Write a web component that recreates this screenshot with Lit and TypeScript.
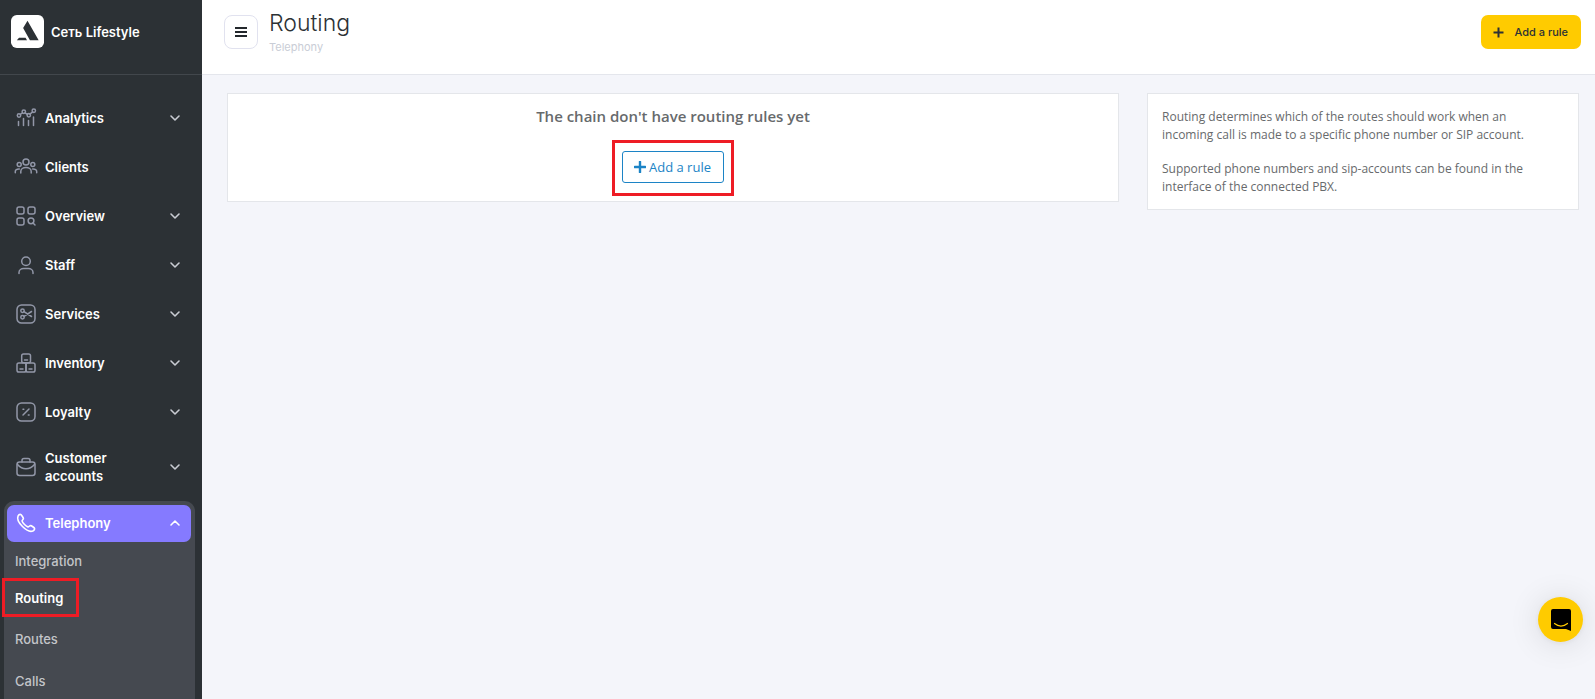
import { LitElement, html, css, svg, nothing } from "lit";
import { customElement, property } from "lit/decorators.js";

const icons: Record<string, unknown> = {
  analytics: svg`<circle cx="3" cy="7.5" r="1.7"/><circle cx="7.8" cy="3.8" r="1.7"/><circle cx="12.8" cy="7.3" r="1.7"/><circle cx="17.8" cy="2.8" r="1.7"/><path d="M4.2 6.5 6.5 4.8M9 4.8l2.6 1.7M13.9 6.1l2.8-2.3M2.5 13.5v4M7.5 10.5v7M12.5 12.5v5M17.5 9v8.500"/>`,
  clients: svg`<circle cx="10" cy="5" r="3"/><circle cx="3.200" cy="7.500" r="2"/><circle cx="16.800" cy="7.500" r="2"/><path d="M4.800 16v-1.500a5.200 4 0 0 1 10.400 0V16M-.7 15.800v-1.300c0-1.600 1.500-2.700 4-2.500M20.700 15.800v-1.300c0-1.600-1.500-2.700-4-2.500"/>`,
  overview: svg`<rect x="1" y="1" width="7" height="7" rx="2"/><rect x="12" y="1" width="7" height="7" rx="2"/><rect x="1" y="12" width="7" height="7" rx="2"/><circle cx="15" cy="14.800" r="2.900"/><path d="m17 17 2 2"/>`,
  staff: svg`<circle cx="10" cy="6.300" r="4.300"/><path d="M3 18.500v-1c0-2.600 2.400-4 4.600-4h4.800c2.200 0 4.600 1.400 4.600 4v1"/>`,
  services: svg`<rect x="1" y="1" width="18" height="18" rx="4.500"/><circle cx="6.500" cy="6.800" r="1.700"/><circle cx="6.500" cy="13.200" r="1.700"/><path d="m8 7.700 7.500 4.800M8 12.300l7.500-4.800"/>`,
  inventory: svg`<rect x="5.700" y="1" width="8.800" height="8.800" rx="1.800"/><rect x="1" y="10" width="9" height="9" rx="1.800"/><rect x="10" y="10" width="9" height="9" rx="1.800"/><path d="M8.500 7h3M4 16h3M13 16h3"/>`,
  loyalty: svg`<rect x="1" y="1" width="18" height="18" rx="4.500"/><path d="m7 13 6-6M7 7.300h.8M12.300 13h.8"/>`,
  accounts: svg`<path d="M6 5V3.500A2 2 0 0 1 8 1.500h4a2 2 0 0 1 2 2V5"/><rect x="1" y="5" width="18" height="13.500" rx="2.500"/><path d="M1.500 7.500c2.200 2.500 5.300 4.300 8.500 4.300s6.300-1.800 8.500-4.300"/>`,
  phone: svg`<path d="M2 3.200C1 5.500 2.500 9.500 6.500 13.500s8 5.500 10.300 4.500c1.200-.6 2-1.700 1.700-2.700-.2-.6-3-2.600-3.900-2.700-1-.1-1.700 1.500-2.700 1.300C10.200 13.500 6.500 9.800 6.100 8.100c-.2-1 1.400-1.700 1.300-2.700C7.300 4.500 5.300 1.700 4.700 1.500 3.700 1.200 2.600 2 2 3.200z"/>`,
};

const chevron = (up = false) => html`<svg class="chevron" viewBox="0 0 10 6" aria-hidden="true">
  <path d=${up ? "M1 5 5 1l4 4" : "M1 1l4 4 4-4"}></path>
</svg>`;

@customElement("nav-item")
class NavItem extends LitElement {
  @property() label = "";
  @property() icon = "";
  @property({ type: Boolean }) link = false;
  @property({ type: Boolean, reflect: true }) open = false;

  static styles = css`
    :host { display: block; }
    .row {
      box-sizing: border-box;
      display: flex;
      align-items: center;
      width: 100%;
      min-height: 49px;
      padding: 13px 22px 13px 16px;
      border: 0;
      background: none;
      color: #fff;
      font: 600 13px/18px Inter, sans-serif;
      text-align: left;
      text-decoration: none;
      cursor: pointer;
    }
    .label { flex: 1; padding: 0 40px 0 9px; }
    .icon {
      flex: none;
      width: 20px;
      height: 20px;
      overflow: visible;
      fill: none;
      stroke: #9297a8;
      stroke-width: 1.5;
      stroke-linecap: round;
      stroke-linejoin: round;
    }
    .chevron {
      flex: none;
      width: 10px;
      height: 6px;
      overflow: visible;
      fill: none;
      stroke: #c9ccd3;
      stroke-width: 1.6;
      stroke-linecap: round;
      stroke-linejoin: round;
    }
    :host([open]) .row {
      min-height: 37px;
      padding: 8px 11px 9px 9px;
      border-radius: 7px;
      background: #857aff;
    }
    :host([open]) .icon { stroke: #fff; stroke-width: 1.6; }
    :host([open]) .chevron { stroke: #fff; }
  `;

  render() {
    const body = html`
      <svg class="icon" viewBox="0 0 20 20" aria-hidden="true">${icons[this.icon]}</svg>
      <span class="label">${this.label}</span>
      ${this.link ? nothing : chevron(this.open)}
    `;
    return this.link
      ? html`<a class="row" href="#">${body}</a>`
      : html`<button class="row" type="button" aria-expanded=${this.open}>${body}</button>`;
  }
}

@customElement("app-root")
class AppRoot extends LitElement {
  static styles = css`
    :host {
      display: flex;
      height: 100vh;
      overflow: hidden;
      background: #f4f5fa;
      font-family: Inter, sans-serif;
    }
    .sidebar {
      flex: none;
      width: 202px;
      background: #2c3135;
      overflow: hidden;
    }
    .brand {
      box-sizing: border-box;
      display: flex;
      align-items: flex-start;
      gap: 7px;
      height: 75px;
      padding: 15px 11px 0;
      border-bottom: 1px solid #42474c;
      color: #fff;
      font-size: 13px;
      font-weight: 600;
      line-height: 34px;
    }
    .logo { width: 33px; height: 33px; }
    .nav { padding-top: 18px; }
    .group {
      margin: 3px 7px 0 4px;
      padding: 4px 4px 0 3px;
      border-radius: 10px 10px 0 0;
      background: #454950;
    }
    .sub {
      display: grid;
      grid-template-rows: 37px 38px 44px 40px;
      margin: 0;
      padding: 0 0 0 8px;
      list-style: none;
      align-items: center;
      justify-items: start;
    }
    .sub a {
      position: relative;
      display: block;
      color: #c3c5c9;
      font-size: 13px;
      font-weight: 500;
      line-height: 18px;
      text-decoration: none;
    }
    .sub .current { color: #fff; font-weight: 600; }
    .marked { position: relative; }
    .marked::after {
      content: "";
      position: absolute;
      inset: -11px -10px -13px;
      border: 3px solid #ee1c25;
      pointer-events: none;
    }
    .sub .marked::after { inset: -11px -16px -10px -13px; }
    .page { flex: 1; min-width: 0; }
    .header {
      box-sizing: border-box;
      display: flex;
      align-items: flex-start;
      height: 75px;
      padding: 0 14px 0 22px;
      border-bottom: 1px solid #e4e6ec;
      background: #fff;
    }
    .menu {
      display: grid;
      place-items: center;
      width: 34px;
      height: 34px;
      margin: 15px 11px 0 0;
      padding: 0;
      border: 1px solid #e1e2ef;
      border-radius: 8px;
      background: #fff;
    }
    .menu svg { width: 12px; height: 10px; }
    .titles { flex: 1; padding-top: 8px; }
    .title {
      margin: 0;
      color: #2c3135;
      font-size: 23px;
      font-weight: 300;
      line-height: 30px;
    }
    .crumb {
      margin: 0;
      color: #c9cdd6;
      font-size: 11px;
      line-height: 18px;
    }
    .primary {
      display: flex;
      align-items: center;
      gap: 10px;
      height: 34px;
      margin-top: 15px;
      padding: 0 13px 0 12px;
      border: 0;
      border-radius: 7px;
      background: #ffcb00;
      color: #2c3135;
      font: 500 11px/18px Inter, sans-serif;
    }
    .primary svg { width: 11px; height: 11px; }
    .content {
      display: grid;
      grid-template-columns: 2fr 1fr;
      align-items: start;
      padding: 18px 2px 0 11px;
      font-family: "Open Sans", sans-serif;
      color: #676a6c;
    }
    .card {
      margin: 0 14px;
      border: 1px solid #e4e6ea;
      background: #fff;
    }
    .empty {
      display: flex;
      flex-direction: column;
      align-items: center;
      gap: 24px;
      padding: 11px 14px 18px;
    }
    .empty h2 {
      margin: 0;
      font-size: 15px;
      font-weight: 600;
      line-height: 22px;
    }
    .outline {
      display: flex;
      align-items: center;
      gap: 3px;
      height: 32px;
      padding: 0 12px 0 11px;
      border: 1px solid #1c84c6;
      border-radius: 3px;
      background: #fff;
      color: #1c84c6;
      font: 400 13px/18px "Open Sans", sans-serif;
    }
    .outline svg { width: 12px; height: 12px; }
    .info { padding: 14px 32px 13px 14px; font-size: 12px; line-height: 18px; }
    .info p { margin: 0 0 16px; }
    .info p:last-child { margin: 0; }
    .chat {
      position: fixed;
      right: 12px;
      bottom: 57px;
      display: grid;
      place-items: center;
      width: 45px;
      height: 45px;
      padding: 0;
      border: 0;
      border-radius: 50%;
      background: #ffcb00;
      box-shadow: 0 1px 6px rgba(0, 0, 0, 0.06), 0 2px 32px rgba(0, 0, 0, 0.12);
    }
    .chat svg { width: 20px; height: 22px; }
  `;

  private items = [
    ["analytics", "Analytics"],
    ["clients", "Clients"],
    ["overview", "Overview"],
    ["staff", "Staff"],
    ["services", "Services"],
    ["inventory", "Inventory"],
    ["loyalty", "Loyalty"],
    ["accounts", "Customer accounts"],
  ];

  render() {
    return html`
      <aside class="sidebar">
        <div class="brand">
          <svg class="logo" viewBox="0 0 34 34" aria-hidden="true">
            <rect width="34" height="34" rx="6" fill="#fff"></rect>
            <path d="M17 6 28.500 26H19.500L12.500 13.300zM8.300 23.500H15L16.500 26H6z" fill="#2c3135"></path>
          </svg>
          <span>Сеть Lifestyle</span>
        </div>
        <nav class="nav" aria-label="Main">
          ${this.items.map(
            ([icon, label]) => html`<nav-item icon=${icon} label=${label} ?link=${icon === "clients"}></nav-item>`
          )}
          <div class="group">
            <nav-item icon="phone" label="Telephony" open></nav-item>
            <ul class="sub">
              <li><a href="#">Integration</a></li>
              <li><a class="current marked" href="#" aria-current="page">Routing</a></li>
              <li><a href="#">Routes</a></li>
              <li><a href="#">Calls</a></li>
            </ul>
          </div>
        </nav>
      </aside>
      <div class="page">
        <header class="header">
          <button class="menu" type="button" aria-label="Toggle menu">
            <svg viewBox="0 0 12 10" aria-hidden="true">
              <path d="M0 1h12M0 5h12M0 9h12" stroke="#23282c" stroke-width="2"></path>
            </svg>
          </button>
          <div class="titles">
            <h1 class="title">Routing</h1>
            <p class="crumb">Telephony</p>
          </div>
          <button class="primary" type="button">
            <svg viewBox="0 0 11 11" aria-hidden="true">
              <path d="M5.500 .5v10M.5 5.500h10" stroke="#2c3135" stroke-width="2"></path>
            </svg>
            Add a rule
          </button>
        </header>
        <main class="content">
          <section class="card empty">
            <h2>The chain don't have routing rules yet</h2>
            <div class="marked">
              <button class="outline" type="button">
                <svg viewBox="0 0 12 12" aria-hidden="true">
                  <path d="M6 .8v10.400M.8 6h10.400" stroke="#1c84c6" stroke-width="2.400" stroke-linecap="round"></path>
                </svg>
                Add a rule
              </button>
            </div>
          </section>
          <aside class="card info">
            <p>Routing determines which of the routes should work when an incoming call is made to a specific phone number or SIP account.</p>
            <p>Supported phone numbers and sip-accounts can be found in the interface of the connected PBX.</p>
          </aside>
        </main>
      </div>
      <button class="chat" type="button" aria-label="Open chat">
        <svg viewBox="0 0 20 22" aria-hidden="true">
          <path d="M2 0h16a2 2 0 0 1 2 2v20l-5-2H2a2 2 0 0 1-2-2V2a2 2 0 0 1 2-2z"></path>
          <path d="M3.500 14.500c4 3.200 9 3.200 13 0" fill="none" stroke="#ffcb00" stroke-width="1.200" stroke-linecap="round"></path>
        </svg>
      </button>
    `;
  }
}
